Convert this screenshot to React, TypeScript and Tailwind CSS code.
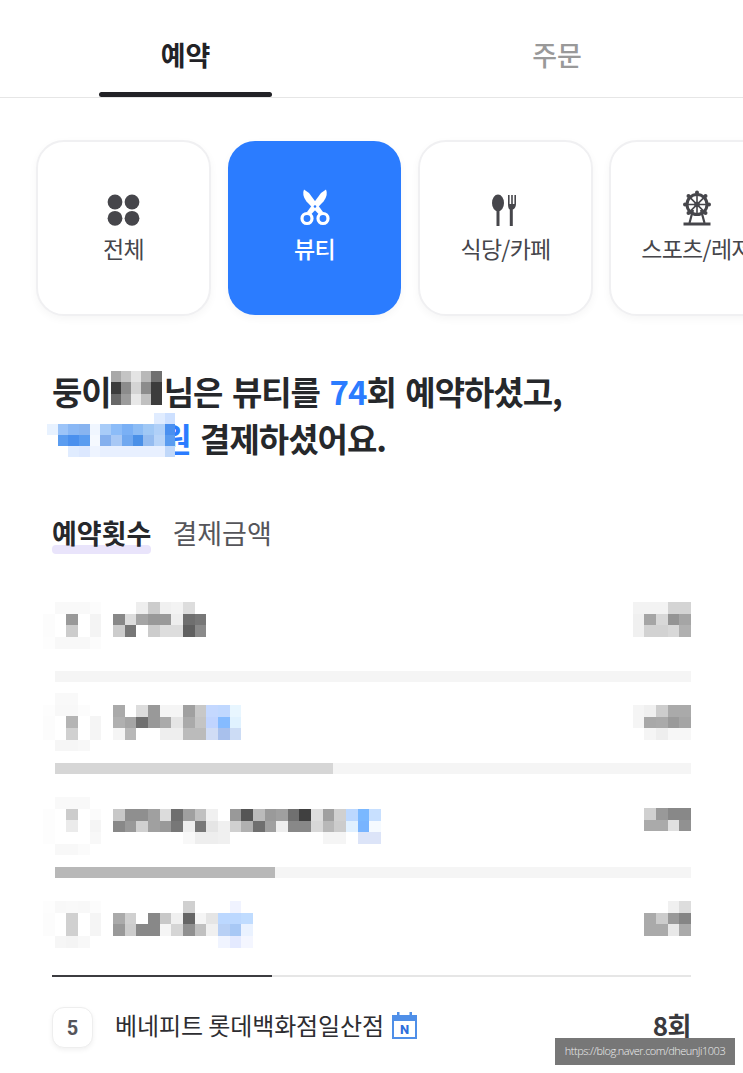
import React from 'react';

const CELL = 11.66;

// blurred-out private text, drawn as a grid of colour blocks
const Mosaic: React.FC<{ rows: string[]; cell?: number; cellH?: number; className?: string }> = ({ rows, cell = CELL, cellH, className = '' }) => (
  <div className={`shrink-0 flex flex-col blur-[0.6px] ${className}`}>
    {rows.map((row, r) => (
      <div key={r} className="flex">
        {row.split(' ').map((c, i) => (
          <div key={i} style={{ width: cell, height: cellH ?? cell, backgroundColor: c === '-' ? 'transparent' : `#${c}` }} />
        ))}
      </div>
    ))}
  </div>
);

const DotsIcon = () => (
  <svg width="33" height="32" viewBox="0 0 33 32" fill="#46464b">
    <circle cx="8" cy="8" r="7.4" />
    <circle cx="25" cy="8" r="7.4" />
    <circle cx="8" cy="24.3" r="7.4" />
    <circle cx="25" cy="24.3" r="7.4" />
  </svg>
);

const ScissorsIcon = () => (
  <svg width="32" height="37" viewBox="0 0 32 37" fill="#fff">
    <path d="M5 .5 L10 4 L24 23 L20.5 26 L7.5 12.5 Q2.5 6 5 .5Z" />
    <path d="M27 .5 L22 4 L8 23 L11.5 26 L24.5 12.5 Q29.5 6 27 .5Z" />
    <circle cx="8" cy="29.5" r="5" fill="#2b7cff" stroke="#fff" strokeWidth="3.2" />
    <circle cx="24" cy="29.5" r="5" fill="#2b7cff" stroke="#fff" strokeWidth="3.2" />
    <circle cx="16" cy="17.5" r="1.3" fill="#2b7cff" />
  </svg>
);

const CutleryIcon = () => (
  <svg width="30" height="32" viewBox="0 0 30 32" fill="#46464b">
    <ellipse cx="7" cy="9" rx="6" ry="8.5" />
    <rect x="5.5" y="14" width="3" height="18" />
    <path d="M17 1h1.6v9h1.6V1h1.6v9h1.6V1H25v9c0 3-1.6 5-3.2 5.6V32h-3V15.600C17.600 15 17 13 17 10Z" />
  </svg>
);

const WheelIcon = () => (
  <svg width="30" height="36" viewBox="0 0 30 36" fill="none" stroke="#46464b">
    <circle cx="15" cy="14.500" r="10" strokeWidth="3" />
    <g strokeWidth="1.600">
      <path d="M15 3V26M3.500 14.500H26.500M6.900 6.400L23.100 22.600M23.100 6.400L6.900 22.600" />
    </g>
    <circle cx="15" cy="14.500" r="2.800" fill="#46464b" stroke="none" />
    <g fill="#46464b" stroke="none">
      <circle cx="15" cy="2.500" r="2" />
      <circle cx="3" cy="14.500" r="2" />
      <circle cx="27" cy="14.500" r="2" />
      <circle cx="6.500" cy="6" r="2" />
      <circle cx="23.500" cy="6" r="2" />
      <circle cx="6.500" cy="23" r="2" />
      <circle cx="23.500" cy="23" r="2" />
    </g>
    <path d="M11 20L7.500 33M19 20L22.500 33" strokeWidth="2.200" />
    <path d="M1.500 34H28.500" strokeWidth="3" />
  </svg>
);

const CATEGORIES = [
  { label: '전체', icon: <DotsIcon /> },
  { label: '뷰티', icon: <ScissorsIcon />, active: true },
  { label: '식당/카페', icon: <CutleryIcon /> },
  { label: '스포츠/레저', icon: <WheelIcon /> },
];

const RANKS = [
  {
    box: 'h-[69px]',
    nameTop: 'mt-0',
    sideTop: 'mt-0',
    icon: ['- f9f9f9 f9f9f9 f9f9f9 fcfcfc', 'fcfcfc ffffff 999999 ffffff f4f4f4', 'fcfcfc ffffff cccccc ffffff f4f4f4', 'fdfdfd f8f8f8 f8f8f8 f8f8f8 fcfcfc'],
    name: [
      'ffffff ffffff eeeeee cccccc f0f0f0 f3f3f3 dddddd ffffff',
      '888888 dddddd a5a5a5 999999 999999 eeeeee 6f6f6f 777777',
      'cccccc 777777 ffffff cccccc dddddd dddddd 606060 8a8a8a',
    ],
    side: ['f3f3f3 f3f3f3 f3f3f3 d4d4d4 d4d4d4', 'f0f0f0 a5a5a5 d8d8d8 949494 a5a5a5', 'f0f0f0 d2d2d2 d2d2d2 d8d8d8 b0b0b0'],
    fill: '',
    after: 'mb-[11px]',
  },
  {
    box: 'h-[70px]',
    nameTop: 'mt-[12px]',
    sideTop: 'mt-[12px]',
    icon: ['- f9f9f9 f9f9f9 ffffff ffffff', 'fdfdfd f8f8f8 f8f8f8 fcfcfc ffffff', 'fcfcfc ffffff b4b4b4 ffffff f5f5f5', 'fcfcfc ffffff d0d0d0 ffffff f5f5f5', 'ffffff f6f6f6 f6f6f6 f8f8f8 ffffff'],
    name: [
      'aaaaaa ffffff dddddd 999999 f5f5f5 f5f5f5 a0a0a0 c8c8c8 c4d8ff c0d8ff e8f6ff',
      'b0b0b0 a5a5a5 707070 999999 aaaaaa e5e5e5 aaaaaa c4c4c4 c0d4ff 85bbff e0f2ff',
      'f5f5f5 b8b8b8 ffffff ffffff eeeeee eeeeee bbbbbb bbbbbb d0dcf5 a8c0ec ccdcf5',
    ],
    side: ['f5f5f5 f0f0f0 cdcdcd aaaaaa aaaaaa', 'f5f5f5 a8a8a8 aaaaaa 9a9a9a a5a5a5', 'ffffff f5f5f5 eeeeee f7f7f7 f7f7f7'],
    fill: 'w-[278px] bg-[#d6d6d6]',
    after: 'mb-[23px]',
  },
  {
    box: 'h-[70px]',
    nameTop: 'mt-[12px]',
    sideTop: 'mt-[11px]',
    icon: ['- f9f9f9 f9f9f9 f9f9f9 ffffff', 'fdfdfd ffffff cccccc ffffff fbfbfb', 'fdfdfd ffffff ebebeb ffffff f5f5f5', 'fdfdfd ffffff ffffff ffffff f8f8f8', 'ffffff f8f8f8 f8f8f8 fbfbfb ffffff'],
    name: [
      'c8c8c8 8f8f8f 8f8f8f a0a0a0 dcdcdc 6f6f6f a0a0a0 c0c0c0 f0f0f0 ffffff 999999 555555 bbbbbb 9a9a9a a0a0a0 707070 404040 dddddd a0a0a0 d0d0d0 bcd8ff 7ab8ff c8e0ff',
      '888888 999999 d0d0d0 a0a0a0 999999 777777 eeeeee 777777 e5e5e5 f0f0f0 d0d0d0 b0b0b0 6f6f6f a0a0a0 eeeeee 888888 888888 d8d8d8 b8b8b8 cccccc e0f0ff 78b4ff f5faff',
      'ffffff ffffff ffffff ffffff ffffff ffffff f8f8f8 eeeeee eeeeee f0f0f0 ffffff ffffff ffffff ffffff ffffff ffffff ffffff ffffff f5f5f5 f5f5f5 ffffff dce4f8 dce4f8',
    ],
    side: ['ffffff d0d0d0 999999 888888 888888', 'ffffff aaaaaa aaaaaa e0e0e0 919191'],
    fill: 'w-[220px] bg-[#b8b8b8]',
    after: 'mb-[23px]',
  },
  {
    box: 'h-[74px]',
    nameTop: 'mt-0',
    sideTop: 'mt-0',
    icon: ['fdfdfd f8f8f8 f9f9f9 f8f8f8 fcfcfc', 'fcfcfc ffffff d0d0d0 ffffff f5f5f5', 'fcfcfc ffffff d0d0d0 ffffff f5f5f5', 'ffffff f6f6f6 f4f4f4 f8f8f8 ffffff'],
    name: [
      'ffffff ffffff ffffff ffffff ffffff ffffff d0d0d0 ffffff ffffff ffffff f0f3ff ffffff',
      'aaaaaa d0d0d0 ffffff 888888 c8c8c8 f0f0f0 666666 f5f5f5 e5e5e5 bcd8ff bcd8ff c0dcff',
      '999999 cccccc 888888 888888 f5f5f5 d5d5d5 909090 c0c0c0 f0f0f0 b8d0f5 a8c8f5 eaf2ff',
      'ffffff ffffff ffffff ffffff ffffff ffffff ffffff ffffff ffffff f0f4ff e4eaff f4f6ff',
    ],
    side: ['ffffff ffffff ffffff f0f0f0 dddddd', 'ffffff aaaaaa cccccc 999999 858585', 'ffffff aaaaaa aaaaaa e8e8e8 aaaaaa'],
    fill: '',
    after: '',
  },
];

const App: React.FC = () => {
  return (
    <div className="relative w-[743px] h-[1073px] overflow-hidden bg-white font-['Noto_Sans_CJK_KR',sans-serif]">
      <div className="flex h-[98px] border-b border-[#e6e6e6]">
        <div className="w-[371px] flex flex-col items-center">
          <div className="flex-1 flex items-center pt-[18px] text-[27px] font-bold text-[#222226]">예약</div>
          <div className="w-[173px] h-[5px] rounded-full bg-[#222226]" />
        </div>
        <div className="w-[372px] flex flex-col items-center">
          <div className="flex-1 flex items-center pt-[18px] text-[27px] font-medium text-[#999999]">주문</div>
          <div className="h-[5px]" />
        </div>
      </div>

      <div className="flex gap-[16px] pl-[36px] mt-[42px]">
        {CATEGORIES.map((c) => (
          <div
            key={c.label}
            className={
              c.active
                ? 'm-px w-[173px] h-[174px] shrink-0 flex flex-col items-center justify-center pb-[3px] rounded-[27px] bg-[#2b7cff] text-white font-medium text-[23px] shadow-[0_3px_8px_rgba(0,0,0,0.04)]'
                : 'w-[175px] h-[176px] shrink-0 flex flex-col items-center justify-center pb-[3px] rounded-[28px] border-2 border-[#f0f0f2] bg-white text-[#46464b] text-[23px] shadow-[0_3px_8px_rgba(0,0,0,0.04)]'
            }
          >
            <div className="h-[38px] mb-[5px] flex items-end">{c.icon}</div>
            <div className="whitespace-nowrap leading-[34px] tracking-[-0.7px]">{c.label}</div>
          </div>
        ))}
      </div>

      <div className="px-[52px]">
        <div className="mt-[52px] text-[33px] font-bold text-[#26282b] tracking-[-1px] [word-spacing:3px]">
          <div className="flex items-center h-[47px] whitespace-pre">
            <span>둥이</span>
            <Mosaic
              cell={10.2}
              cellH={11.3}
              className="-mt-[7px] mr-[2px]"
              rows={[
                'a8a8a8 c4c4c4 e4e4e4 b8b8b8 707070',
                '3c3c3c 8c8c8c d4d4d4 8c8c8c 3c3c3c',
                '686868 9c9c9c e8e8e8 c0c0c0 3c3c3c',
              ]}
            />
            <span>님은 뷰티를 </span>
            <span className="text-[#2b7cff]">74</span>
            <span>회 예약하셨고,</span>
          </div>
          <div className="flex items-center h-[47px] whitespace-pre">
            <Mosaic
              cell={10.7}
              cellH={11}
              className="relative z-10 -ml-[5px] -mt-[8px]"
              rows={[
                'ffffff ffffff ffffff ffffff ffffff ffffff ffffff ffffff ffffff ffffff e0ecff cde0ff',
                'e8f2ff 9cc4f8 8ab8f5 88b4f0 f0f6ff a8ccf8 8cbcf8 7ab0f5 8cbcf5 a0c8f5 b0d0f8 4a90f0',
                'ffffff 5a9cf0 4a90ee 5a9cf0 f5f9ff 85b0ee a8c8f5 70a8f0 4a90e8 95bcf0 b8d4f8 5a9cf0',
                'ffffff ffffff e0ecff dce8ff eef4ff e8f0ff e8f0ff e8f0ff e8f0ff e8f0ff e8f0ff c0d8fa',
              ]}
            />
            <span className="-ml-[14px] text-[#2b7cff]">원</span>
            <span> 결제하셨어요.</span>
          </div>
        </div>

        <div className="mt-[51px] flex gap-[21px] h-[41px] text-[27px] leading-[40px]">
          <div className="relative font-bold text-[#26282b]">
            <div className="absolute left-0 right-0 top-[32px] h-[9px] rounded-[4px] bg-[#e9e4fb]" />
            <span className="relative">예약횟수</span>
          </div>
          <div className="text-[#55555a]">결제금액</div>
        </div>

        <div className="mt-[48px]">
          {RANKS.map((r, i) => (
            <div key={i} className={r.after}>
              <div className={`flex gap-[11.7px] -ml-[9px] ${r.box}`}>
                <Mosaic rows={r.icon} />
                <Mosaic rows={r.name} className={r.nameTop} />
                <Mosaic rows={r.side} className={`ml-auto ${r.sideTop}`} />
              </div>
              {i < 3 && (
                <div className="ml-[3px] h-[11px] bg-[#f5f5f5] blur-[0.3px]">
                  <div className={`h-full ${r.fill}`} />
                </div>
              )}
            </div>
          ))}
        </div>

        <div className="h-[2px] bg-[#e6e6e6]">
          <div className="h-full w-[220px] bg-[#3c3c40]" />
        </div>

        <div className="mt-[30px] flex items-center">
          <div className="w-[41px] h-[41px] flex items-center justify-center rounded-[12px] border border-[#eeeeee] bg-white text-[20px] font-bold text-[#55555a] shadow-[0_2px_5px_rgba(0,0,0,0.06)] font-['Roboto',sans-serif]">
            5
          </div>
          <div className="ml-[22px] text-[24px] tracking-[-0.1px] text-[#2d2d31] whitespace-nowrap -mt-[6px]">베네피트 롯데백화점일산점</div>
          <svg className="ml-[8px] -mt-[4px]" width="25" height="27" viewBox="0 0 25 27" fill="none">
            <rect x="1" y="4" width="23" height="22" stroke="#4f8fe8" strokeWidth="2" fill="#fff" />
            <rect x="1" y="4" width="23" height="5" fill="#4f8fe8" />
            <rect x="5" y="0" width="2.500" height="5" fill="#4f8fe8" />
            <rect x="17.500" y="0" width="2.500" height="5" fill="#4f8fe8" />
            <text x="12.500" y="22" textAnchor="middle" fontSize="13" fontWeight="800" fill="#2f6fdc" fontFamily="Roboto, sans-serif">N</text>
          </svg>
          <div className="ml-auto -mt-[6px] text-[26px] font-bold text-[#3a3a3e] tracking-[-0.5px]">8회</div>
        </div>
      </div>

      <div className="absolute left-[555px] top-[1038px] w-[180px] h-[27px] flex items-center justify-center bg-[#777777] text-[#eeeeee] text-[11px] tracking-[-0.5px] whitespace-nowrap font-['Open_Sans',sans-serif] font-light">
        https://blog.naver.com/dheunJi1003
      </div>
    </div>
  );
};

export default App;
